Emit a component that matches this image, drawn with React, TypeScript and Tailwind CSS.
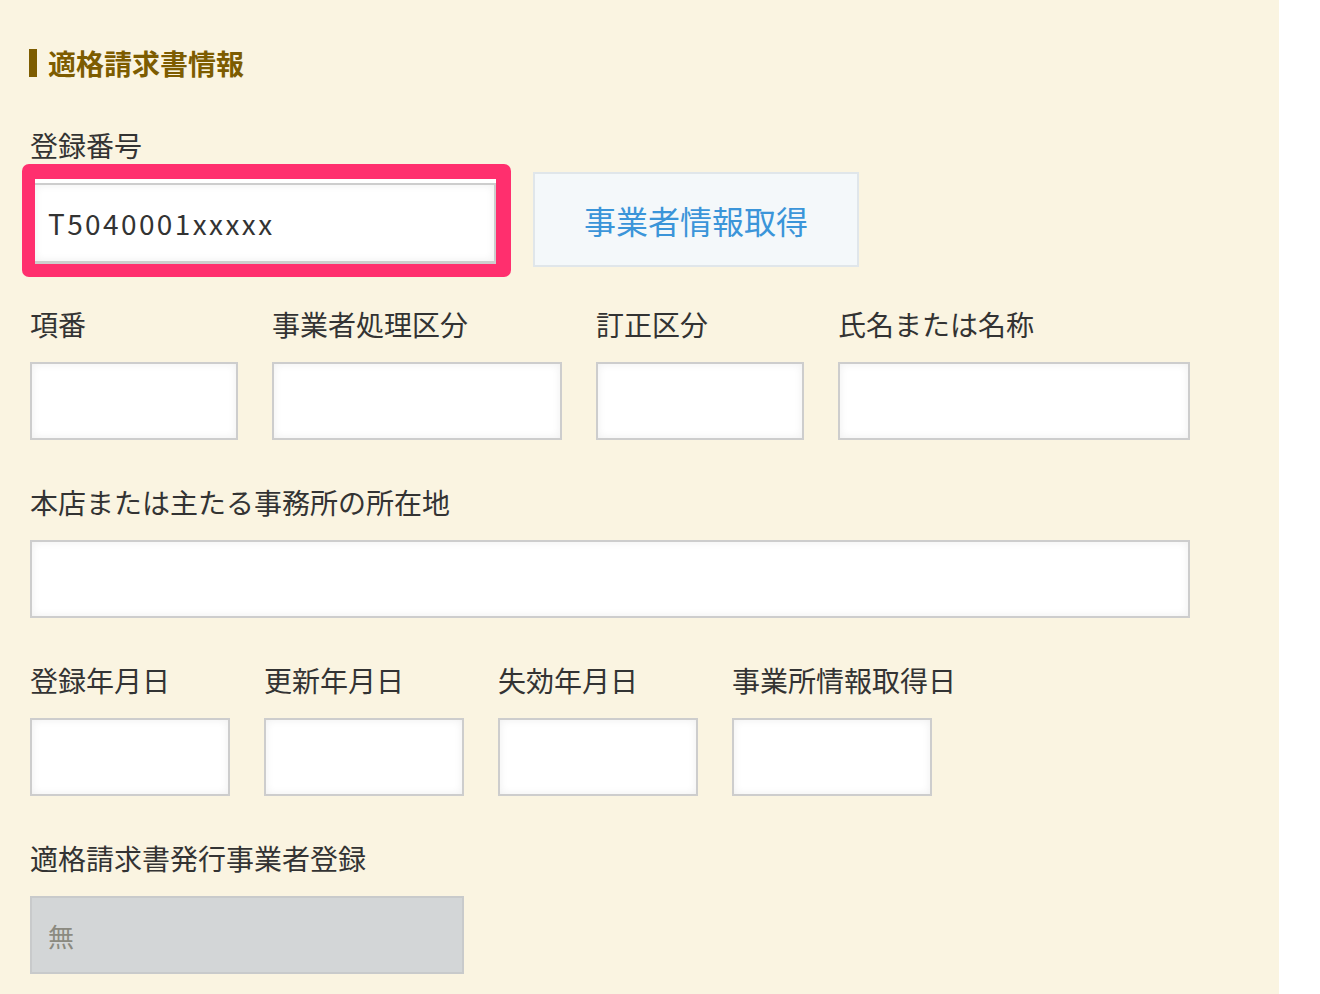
import React from "react";

const FONT = { fontFamily: '"Noto Sans CJK JP", "Noto Sans", sans-serif' };

function Field({ label, width, value, disabled }: { label: string; width: number; value?: string; disabled?: boolean }) {
  return (
    <div style={{ width }}>
      <div className="h-[40px] leading-[40px] text-[28px] text-[#333] whitespace-nowrap">{label}</div>
      <div
        className={
          disabled
            ? "mt-[18px] h-[78px] border-2 border-[#c8cacb] bg-[#d3d6d7] flex items-center pl-[16px] text-[26px] text-[#8b8a80]"
            : "mt-[18px] h-[78px] border-2 border-[#cdcdcd] bg-white shadow-[inset_0_0_8px_rgba(0,0,0,0.07)]"
        }
      >
        {value}
      </div>
    </div>
  );
}

export default function App() {
  return (
    <div className="min-h-[994px] bg-white" style={FONT}>
      <div className="w-[1279px] min-h-[994px] bg-[#faf4e1] px-[30px] pt-[43px] pb-[20px]">
        {/* 見出し */}
        <div className="flex items-center h-[40px] ml-[-1px] gap-[11px]">
          <div className="w-[8px] h-[28px] bg-[#7d5c00]" />
          <h2 className="text-[28px] font-bold text-[#7d5c00] leading-[40px]">適格請求書情報</h2>
        </div>

        {/* 登録番号 */}
        <div className="mt-[42px] h-[40px] leading-[40px] text-[28px] text-[#333]">登録番号</div>
        <div className="mt-[-1px] flex items-start ml-[-8px]">
          <div className="w-[489px] h-[113px] rounded-[7px] bg-[#ff2f6e] pl-[13px] pr-[15px] pt-[15px] pb-[13px]">
            <div className="h-full bg-white pt-[4px]">
              <div className="h-full border-t-2 border-b-[3px] border-r-2 border-[#cdcdcd] shadow-[inset_0_0_8px_rgba(0,0,0,0.07)] flex items-center pl-[13px] text-[28px] text-[#333] tracking-[2.4px]">
                T5040001xxxxx
              </div>
            </div>
          </div>
          <button className="ml-[22px] mt-[8px] w-[326px] h-[95px] border-2 border-[#e0e6ea] bg-[#f4f8fa] text-[32px] text-[#3b95d9]">
            事業者情報取得
          </button>
        </div>

        <div className="mt-[27px] flex gap-[34px]">
          <Field label="項番" width={208} />
          <Field label="事業者処理区分" width={290} />
          <Field label="訂正区分" width={208} />
          <Field label="氏名または名称" width={352} />
        </div>

        <div className="mt-[42px]">
          <Field label="本店または主たる事務所の所在地" width={1160} />
        </div>

        <div className="mt-[42px] flex gap-[34px]">
          <Field label="登録年月日" width={200} />
          <Field label="更新年月日" width={200} />
          <Field label="失効年月日" width={200} />
          <Field label="事業所情報取得日" width={200} />
        </div>

        <div className="mt-[42px]">
          <Field label="適格請求書発行事業者登録" width={434} value="無" disabled />
        </div>
      </div>
    </div>
  );
}
